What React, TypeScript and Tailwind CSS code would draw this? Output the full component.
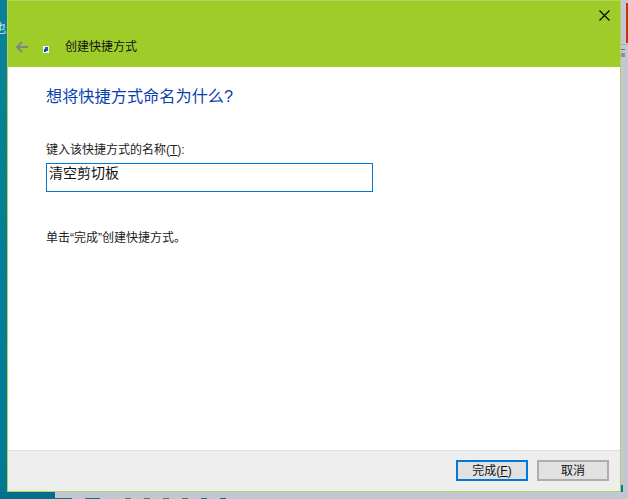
const font = "font-['Liberation_Sans','Noto_Sans_CJK_SC',sans-serif]";

function BackArrow() {
  return (
    <svg width="13" height="12" viewBox="0 0 13 12" fill="none" stroke="#7f8a7c" strokeWidth="2">
      <path d="M13 6H2M7 1L2 6l5 5" />
    </svg>
  );
}

function ShortcutIcon() {
  return (
    <svg width="6" height="7" viewBox="0 0 6 7" className="ml-[15px] mt-[5px]">
      <rect width="6" height="7" fill="#f4f6fa" />
      <rect x="2" y="1" width="3" height="4" fill="#1f5fb8" />
      <rect x="1" y="3" width="2" height="3" fill="#1a3f8f" />
    </svg>
  );
}

function CloseIcon() {
  return (
    <svg width="11" height="11" viewBox="0 0 11 11" fill="none" stroke="#000" strokeWidth="1.1">
      <path d="M0.5 0.5l10 10M10.5 0.5l-10 10" />
    </svg>
  );
}

function Button({ label, hotkey, primary }: { label: string; hotkey?: string; primary?: boolean }) {
  return (
    <button
      className={`w-[72px] h-[21px] flex items-center justify-center bg-[#e1e1e1] text-[12px] text-[#111] border-2 ${
        primary ? "border-[#0078d7]" : "border-[#adadad]"
      }`}
    >
      {label}
      {hotkey && (
        <span>
          (<span className="underline">{hotkey}</span>)
        </span>
      )}
    </button>
  );
}

export default function App() {
  return (
    <div className={`w-[628px] h-[499px] overflow-hidden flex flex-col bg-[#c3c7d3] ${font}`}>
      <div className="flex h-[492px]">
        {/* desktop behind, left */}
        <div className="w-[7px] bg-gradient-to-b from-[#0a8296] to-[#007a93] overflow-hidden pt-[21px] text-[12px] leading-[16px] text-[#d5e6ec] whitespace-nowrap">
          <span className="ml-[-6px]">也通</span>
        </div>

        {/* wizard window */}
        <div className="w-[614px] flex flex-col border border-[#b5d35c] bg-white">
          <div className="h-[66px] bg-[#9ecd2a] flex flex-col">
            <div className="h-[36px] flex justify-end pt-[9px] pr-[10px]">
              <CloseIcon />
            </div>
            <div className="flex items-center pl-[7px] h-[20px]">
              <BackArrow />
              <ShortcutIcon />
              <span className="ml-[16px] text-[12px] text-[#111]">创建快捷方式</span>
            </div>
          </div>

          <div className="flex-1 pl-[38px]">
            <h1 className="mt-[17px] text-[16.2px] leading-[24px] text-[#0a3fb0]">想将快捷方式命名为什么?</h1>
            <p className="mt-[33px] text-[12px] leading-[18px] text-[#222]">
              键入该快捷方式的名称(<span className="underline">T</span>):
            </p>
            <div className="mt-[4px] w-[327px] h-[29px] border border-[#0078d7] px-[2px] text-[14px] leading-[18px] text-[#111]">
              清空剪切板
            </div>
            <p className="mt-[37px] text-[12px] leading-[18px] text-[#222]">单击“完成”创建快捷方式。</p>
          </div>

          <div className="h-[41px] bg-[#eeeeee] border-t border-[#dcdcdc] flex items-center justify-end gap-[9px] pr-[11px] pb-[1px]">
            <Button label="完成" hotkey="F" primary />
            <Button label="取消" />
          </div>
        </div>

        {/* desktop behind, right */}
        <div className="flex-1 flex flex-col items-end">
          <div className="w-[2px] h-[40px] mt-[3px] bg-[#c8340c]" />
          <div className="w-full h-[1px] mt-[1px] bg-[#a9adb8]" />
          <div className="w-[4px] h-[1px] mt-[4px] self-start bg-[#6f7480]" />
          <div className="w-[4px] h-[4px] mt-[3px] self-start bg-[#8b909b]" />
          <div className="flex-1" />
          <div className="w-[2px] h-[7px] self-start bg-[#007a93]" />
        </div>
      </div>

      {/* desktop behind, bottom */}
      <div className="flex-1 flex">
        <div className="w-[55px] bg-[#006f8a]" />
        <div className="flex-1 flex flex-col justify-end">
          <div className="h-[1px] flex gap-[13px]">
            <div className="w-[17px] bg-[#0f6f9c]" />
            <div className="w-[15px] bg-[#0f6f9c]" />
            <div className="w-[6px] ml-[12px] bg-[#6d6d70]" />
            <div className="w-[6px] bg-[#6d6d70]" />
            <div className="w-[6px] bg-[#6d6d70]" />
            <div className="w-[6px] bg-[#6d6d70]" />
            <div className="w-[6px] bg-[#0f6f9c]" />
            <div className="w-[6px] bg-[#0f6f9c]" />
          </div>
        </div>
      </div>
    </div>
  );
}
